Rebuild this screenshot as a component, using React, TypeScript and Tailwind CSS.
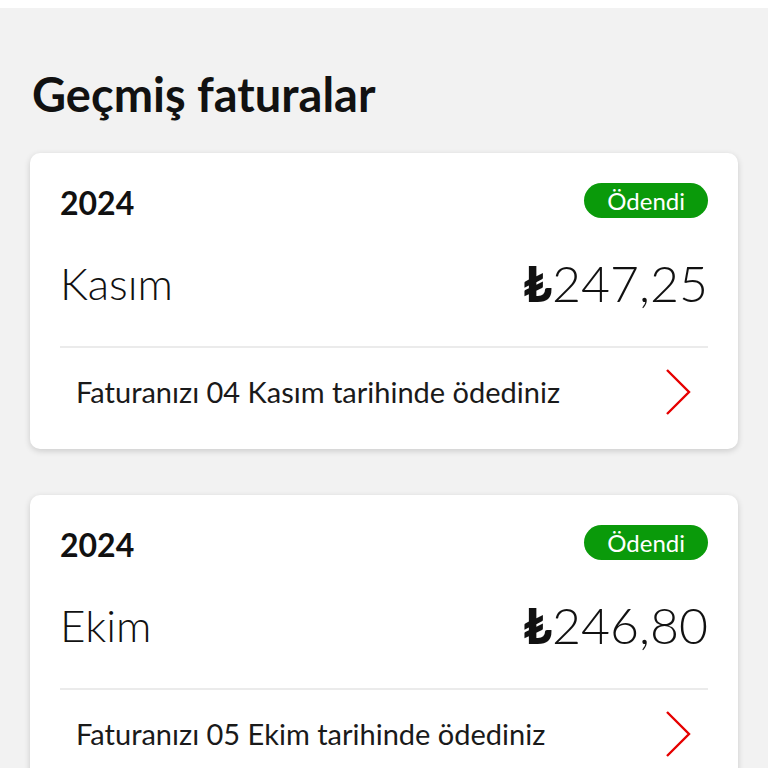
import React from "react";

type Bill = { year: string; month: string; amount: string; note: string };

const bills: Bill[] = [
  { year: "2024", month: "Kasım", amount: "247,25", note: "Faturanızı 04 Kasım tarihinde ödediniz" },
  { year: "2024", month: "Ekim", amount: "246,80", note: "Faturanızı 05 Ekim tarihinde ödediniz" },
];

function Chevron() {
  return (
    <svg width="28" height="48" viewBox="0 0 28 48" fill="none">
      <polyline points="3,2 25,24 3,46" stroke="#e60000" strokeWidth="2.4" strokeLinecap="butt" strokeLinejoin="miter" />
    </svg>
  );
}

function Card({ b }: { b: Bill }) {
  return (
    <div className="bg-white rounded-[10px] shadow-[0_2px_6px_rgba(0,0,0,0.16)] px-[30px] pt-[30px] pb-[13px]">
      <div className="flex justify-between items-start">
        <div className="mt-[2px] text-[32px] leading-[36px] font-bold text-[#111]">{b.year}</div>
        <div className="h-[35px] px-[23px] rounded-full bg-[#0a9a0a] text-white text-[24px] leading-[35px] flex items-center">
          Ödendi
        </div>
      </div>
      <div className="flex justify-between items-end mt-[36px] pb-[37px]">
        <div className="text-[44px] leading-[52px] font-light text-[#111]">{b.month}</div>
        <div className="text-[50px] leading-[52px] font-light text-[#111] flex items-end">
          <span className="font-black">₺</span>
          <span>{b.amount}</span>
        </div>
      </div>
      <div className="h-[2px] bg-[#ebebeb]" />
      <div className="h-[88px] flex items-center justify-between pl-4 pr-4">
        <div className="text-[29px] text-[#1a1a1a]">{b.note}</div>
        <Chevron />
      </div>
    </div>
  );
}

export default function App() {
  return (
    <div className="min-h-screen bg-[#f2f2f2] font-['Lato','Open_Sans',sans-serif]">
      <div className="h-2 bg-white" />
      <div className="px-[30px]">
        <h1 className="mt-[58px] text-[47px] leading-[56px] font-bold text-[#111] pl-[2px]">Geçmiş faturalar</h1>
        <div className="mt-[31px] flex flex-col gap-[46px]">
          {bills.map((b, i) => (
            <Card key={i} b={b} />
          ))}
        </div>
      </div>
    </div>
  );
}
